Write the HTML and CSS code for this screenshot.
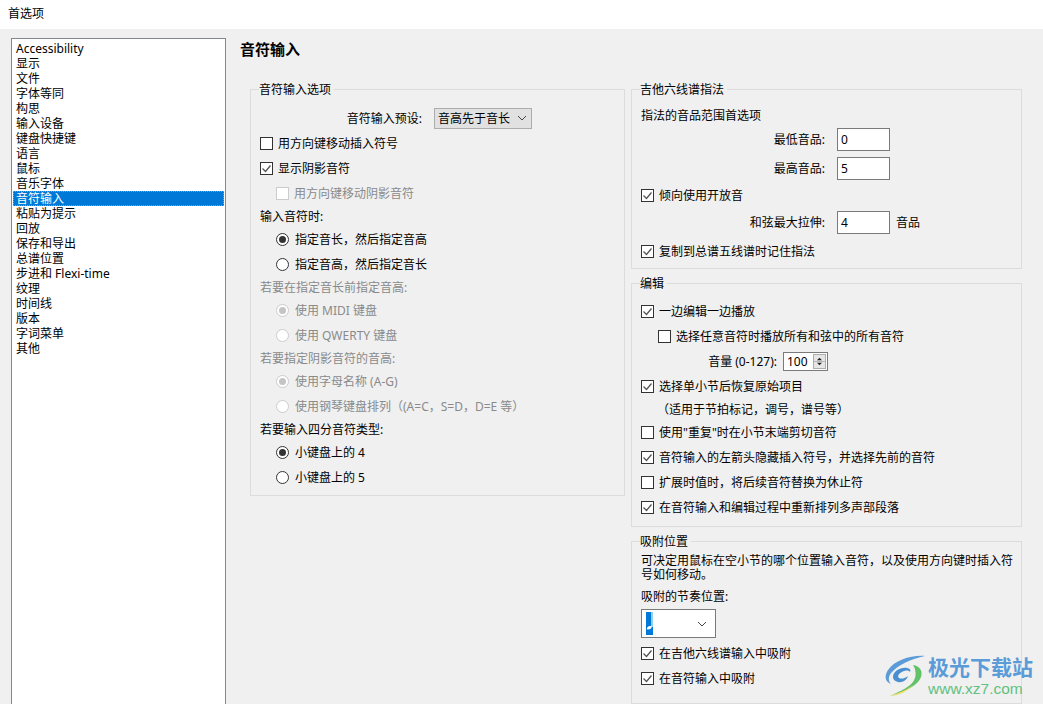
FILE: index.html
```html
<!DOCTYPE html>
<html lang="zh-CN">
<head>
<meta charset="utf-8">
<title>首选项</title>
<link rel="stylesheet" href="styles.css">
</head>
<body>
<header class="titlebar">首选项</header>
<div class="window">
  <ul class="nav">
    <li>Accessibility</li><li>显示</li><li>文件</li><li>字体等同</li><li>构思</li><li>输入设备</li><li>键盘快捷键</li><li>语言</li><li>鼠标</li><li>音乐字体</li>
    <li class="selected">音符输入</li>
    <li>粘贴为提示</li><li>回放</li><li>保存和导出</li><li>总谱位置</li><li>步进和 Flexi-time</li><li>纹理</li><li>时间线</li><li>版本</li><li>字词菜单</li><li>其他</li>
  </ul>
  <main class="content">
    <h1 class="heading">音符输入</h1>
    <div class="columns">
      <section class="group group-left">
        <div class="legend">音符输入选项</div>
        <div class="row row-preset"><span class="preset-label">音符输入预设:</span><span class="combo">音高先于音长<svg class="chev" viewBox="0 0 10 6"><path d="M1 1l4 4 4-4"/></svg></span></div>
        <div class="row"><i class="cb"></i>用方向键移动插入符号</div>
        <div class="row"><i class="cb on"><svg viewBox="0 0 13 13"><path d="M2.5 6.5l3 3 5-6"/></svg></i>显示阴影音符</div>
        <div class="row sub disabled"><i class="cb"></i>用方向键移动阴影音符</div>
        <div class="label">输入音符时:</div>
        <div class="row sub"><i class="rd on"></i>指定音长，然后指定音高</div>
        <div class="row sub"><i class="rd"></i>指定音高，然后指定音长</div>
        <div class="label disabled">若要在指定音长前指定音高:</div>
        <div class="row sub disabled"><i class="rd on"></i>使用 MIDI 键盘</div>
        <div class="row sub disabled"><i class="rd"></i>使用 QWERTY 键盘</div>
        <div class="label disabled">若要指定阴影音符的音高:</div>
        <div class="row sub disabled"><i class="rd on"></i>使用字母名称 (A-G)</div>
        <div class="row sub disabled"><i class="rd"></i>使用钢琴键盘排列（(A=C，S=D，D=E 等）</div>
        <div class="label">若要输入四分音符类型:</div>
        <div class="row sub"><i class="rd on"></i>小键盘上的 4</div>
        <div class="row sub"><i class="rd"></i>小键盘上的 5</div>
      </section>
      <div class="stack">
        <section class="group group-tab">
          <div class="legend">吉他六线谱指法</div>
          <div class="label label-first">指法的音品范围首选项</div>
          <div class="row field field-a"><span class="field-label">最低音品:</span><span class="input">0</span></div>
          <div class="row field field-b"><span class="field-label">最高音品:</span><span class="input">5</span></div>
          <div class="row row-b"><i class="cb on"><svg viewBox="0 0 13 13"><path d="M2.5 6.5l3 3 5-6"/></svg></i>倾向使用开放音</div>
          <div class="row field field-b"><span class="field-label">和弦最大拉伸:</span><span class="input">4</span><span class="unit">音品</span></div>
          <div class="row row-c"><i class="cb on"><svg viewBox="0 0 13 13"><path d="M2.5 6.5l3 3 5-6"/></svg></i>复制到总谱五线谱时记住指法</div>
        </section>
        <section class="group group-edit">
          <div class="legend">编辑</div>
          <div class="row"><i class="cb on"><svg viewBox="0 0 13 13"><path d="M2.5 6.5l3 3 5-6"/></svg></i>一边编辑一边播放</div>
          <div class="row sub-edit"><i class="cb"></i>选择任意音符时播放所有和弦中的所有音符</div>
          <div class="row volume"><span class="volume-label">音量 (0-127):</span><span class="spin"><span class="spin-value">100</span><span class="spin-btns"><svg viewBox="0 0 13 14"><path class="arrow" d="M3.5 5.5h6L6.500 2.500z"/><path class="arrow" d="M3.500 8.500h6l-3 3z"/><path class="sep" d="M0 7h13"/></svg></span></span></div>
          <div class="row"><i class="cb on"><svg viewBox="0 0 13 13"><path d="M2.5 6.5l3 3 5-6"/></svg></i>选择单小节后恢复原始项目</div>
          <div class="label note">（适用于节拍标记，调号，谱号等）</div>
          <div class="row"><i class="cb"></i>使用"重复"时在小节末端剪切音符</div>
          <div class="row"><i class="cb on"><svg viewBox="0 0 13 13"><path d="M2.5 6.5l3 3 5-6"/></svg></i>音符输入的左箭头隐藏插入符号，并选择先前的音符</div>
          <div class="row"><i class="cb"></i>扩展时值时，将后续音符替换为休止符</div>
          <div class="row"><i class="cb on"><svg viewBox="0 0 13 13"><path d="M2.5 6.5l3 3 5-6"/></svg></i>在音符输入和编辑过程中重新排列多声部段落</div>
        </section>
        <section class="group group-snap">
          <div class="legend">吸附位置</div>
          <p class="para">可决定用鼠标在空小节的哪个位置输入音符，以及使用方向键时插入符号如何移动。</p>
          <div class="label snap-label">吸附的节奏位置:</div>
          <div class="snap-combo">
            <svg class="note-glyph" viewBox="0 0 7 23"><rect width="7" height="23" fill="#0078d7"/><rect x="5" width="2" height="15" fill="#8fd0f5"/><path d="M1 16.500q0-2 3-2.500h1.500v2q-1 1.500-4.500 1.500z" fill="#fff"/></svg>
            <svg class="chev" viewBox="0 0 10 6"><path d="M1 1l4 4 4-4"/></svg>
          </div>
          <div class="row row-snap-a"><i class="cb on"><svg viewBox="0 0 13 13"><path d="M2.5 6.5l3 3 5-6"/></svg></i>在吉他六线谱输入中吸附</div>
          <div class="row"><i class="cb on"><svg viewBox="0 0 13 13"><path d="M2.5 6.5l3 3 5-6"/></svg></i>在音符输入中吸附</div>
        </section>
      </div>
    </div>
  </main>
</div>
<div class="watermark">
  <svg class="wm-logo" viewBox="0 0 44 44">
    <path d="M42 3C28 2 12 7 5 17c-4 6-3 12 3 14-3-3-3-8 1-12C15 12 28 6 42 3z" fill="#5b9bd8"/>
    <path d="M10 24c0-6 8-10 14-9 3 .5 4 2 3 4-1-2-5-2-8 0-3 1.500-5 4-3 6 2 1.500 7 0 9-2-1 4-6 7-10 6-3-.5-5-2.500-5-5z" fill="#4a8fd0"/>
    <path d="M30 12c7 1 10 6 8 12-3 8-14 14-31 19 10-5 22-9 25-18 1.500-5 0-10-2-13z" fill="#62c26a"/>
    <path d="M7 43c8-3 17-6 23-11-5 6-13 10-23 11z" fill="#e6da5c"/>
  </svg>
  <div class="wm-text">
    <div class="wm-name">极光下载站</div>
    <div class="wm-url">www.xz7.com</div>
  </div>
</div>
</body>
</html>
```
FILE: styles.css
```css
* { box-sizing: border-box; }
html, body { margin: 0; height: 704px; overflow: hidden; }
body {
  position: relative;
  background: #f0f0f0;
  color: #000;
  font: 12px/15px "Noto Sans", "Noto Sans CJK SC", sans-serif;
}
.titlebar {
  height: 29px;
  background: #fff;
  padding: 6px 0 0 8px;
  line-height: 15px;
}
.window {
  display: flex;
  align-items: flex-start;
  padding: 9px 0 0 11px;
}
.nav {
  flex: none;
  width: 215px;
  height: 720px;
  margin: 0;
  padding: 1.500px 1px 0;
  list-style: none;
  background: #fff;
  border: 1px solid #828790;
}
.nav li { height: 15px; padding-left: 3px; line-height: 15px; white-space: nowrap; }
.nav li.selected { background: #0078d7; color: #fff; outline: 1px dotted #f08a24; outline-offset: -1px; }
.content { flex: 1; padding-left: 14px; min-width: 0; }
.heading { margin: 0; height: 51px; padding-top: 1px; font-size: 15px; line-height: 20px; font-weight: 700; }
.columns { display: flex; align-items: flex-start; gap: 6px; padding-left: 10px; }
.group {
  border: 1px solid #dcdcdc;
  padding: 0 0 0 9px;
}
.legend {
  width: fit-content;
  height: 15px;
  margin: -8px 0 0 -1px;
  padding: 0 3px 0 0;
  background: #f0f0f0;
  line-height: 15px;
  white-space: nowrap;
}
.group-left { width: 375px; height: 407px; }
.stack { width: 391px; display: flex; flex-direction: column; gap: 14px; }
.group-tab { height: 180px; }
.group-edit { height: 244px; }
.group-snap { height: 163px; }
.row { display: flex; align-items: center; height: 25px; white-space: nowrap; }
.label { display: flex; align-items: center; height: 21px; white-space: nowrap; }
.sub { padding-left: 16px; }
.disabled { color: #8a8a8a; }
.row-preset { height: 26px; margin-top: 8px; }
.preset-label { width: 162px; text-align: right; padding-left: 0; }
.combo {
  display: flex;
  align-items: center;
  justify-content: space-between;
  width: 98px;
  height: 21px;
  margin-left: 12px;
  padding: 0 4px 0 3px;
  background: #e1e1e1;
  border: 1px solid #adadad;
}
.chev { width: 10px; height: 6px; fill: none; stroke: #444; stroke-width: 1; }
.cb {
  flex: none;
  display: block;
  width: 13px;
  height: 13px;
  margin-right: 5px;
  background: #fff;
  border: 1px solid #333;
}
.cb svg { display: block; width: 13px; height: 13px; margin: -1px; fill: none; stroke: #555; stroke-width: 1.300; }
.disabled .cb { border-color: #ccc; }
.rd {
  flex: none;
  position: relative;
  display: block;
  width: 13px;
  height: 13px;
  margin-right: 6px;
  background: #fff;
  border: 1px solid #333;
  border-radius: 50%;
}
.rd.on::after {
  content: "";
  position: absolute;
  inset: 2px;
  border-radius: 50%;
  background: #333;
}
.disabled .rd { border-color: #ccc; }
.disabled .rd.on::after { background: #c4c4c4; }
.label-first { height: 20px; margin-top: 8px; }
.field-label { width: 184px; text-align: right; padding-right: 0; }
.input {
  display: flex;
  align-items: center;
  width: 53px;
  height: 23px;
  margin-left: 12px;
  padding-left: 3px;
  background: #fff;
  border: 1px solid #7a7a7a;
}
.field { height: 29px; }
.field-a { margin-top: 0; }
.unit { margin-left: 6px; }
.row-b { height: 25px; }
.group-tab .field-b + .row-b { margin-top: 0; }
.row-c { height: 25px; margin-top: 2px; }
.group-edit .legend + .row { margin-top: 8px; }
.sub-edit { padding-left: 17px; }
.sub-edit .cb { margin-right: 5px; }
.volume { justify-content: flex-start; }
.volume-label { width: 136px; text-align: right; }
.spin {
  display: flex;
  align-items: center;
  justify-content: space-between;
  width: 45px;
  height: 19px;
  margin-left: 6px;
  padding: 0 1px 0 3px;
  background: #fff;
  border: 1px solid #7a7a7a;
}
.spin-btns { display: block; width: 13px; height: 15px; background: #e6e6e6; border: 1px solid #adadad; }
.spin-btns svg { display: block; width: 11px; height: 13px; }
.arrow { fill: #222; }
.sep { stroke: #adadad; fill: none; }
.note { padding-left: 16px; }
.para { width: 372px; margin: 5px 0 0; line-height: 14px; }
.snap-label { height: 20px; margin-top: 4px; }
.snap-combo {
  display: flex;
  align-items: center;
  justify-content: space-between;
  width: 75px;
  height: 29px;
  margin-top: 3px;
  padding: 0 8px 0 4px;
  background: #fff;
  border: 1px solid #7a7a7a;
}
.note-glyph { display: block; width: 7px; height: 23px; }
.row-snap-a { margin-top: 3px; }
.watermark {
  position: absolute;
  left: 883px;
  top: 653px;
  display: flex;
  align-items: flex-start;
  gap: 1px;
  pointer-events: none;
}
.wm-logo { display: block; width: 44px; height: 44px; }
.wm-name {
  color: #5b9bd8;
  font: 700 21px/26px "Noto Sans CJK SC", sans-serif;
  white-space: nowrap;
}
.wm-url {
  margin-top: 1px;
  color: #62c07e;
  font: 500 15.500px/18px "Liberation Sans", sans-serif;
  white-space: nowrap;
}
```
